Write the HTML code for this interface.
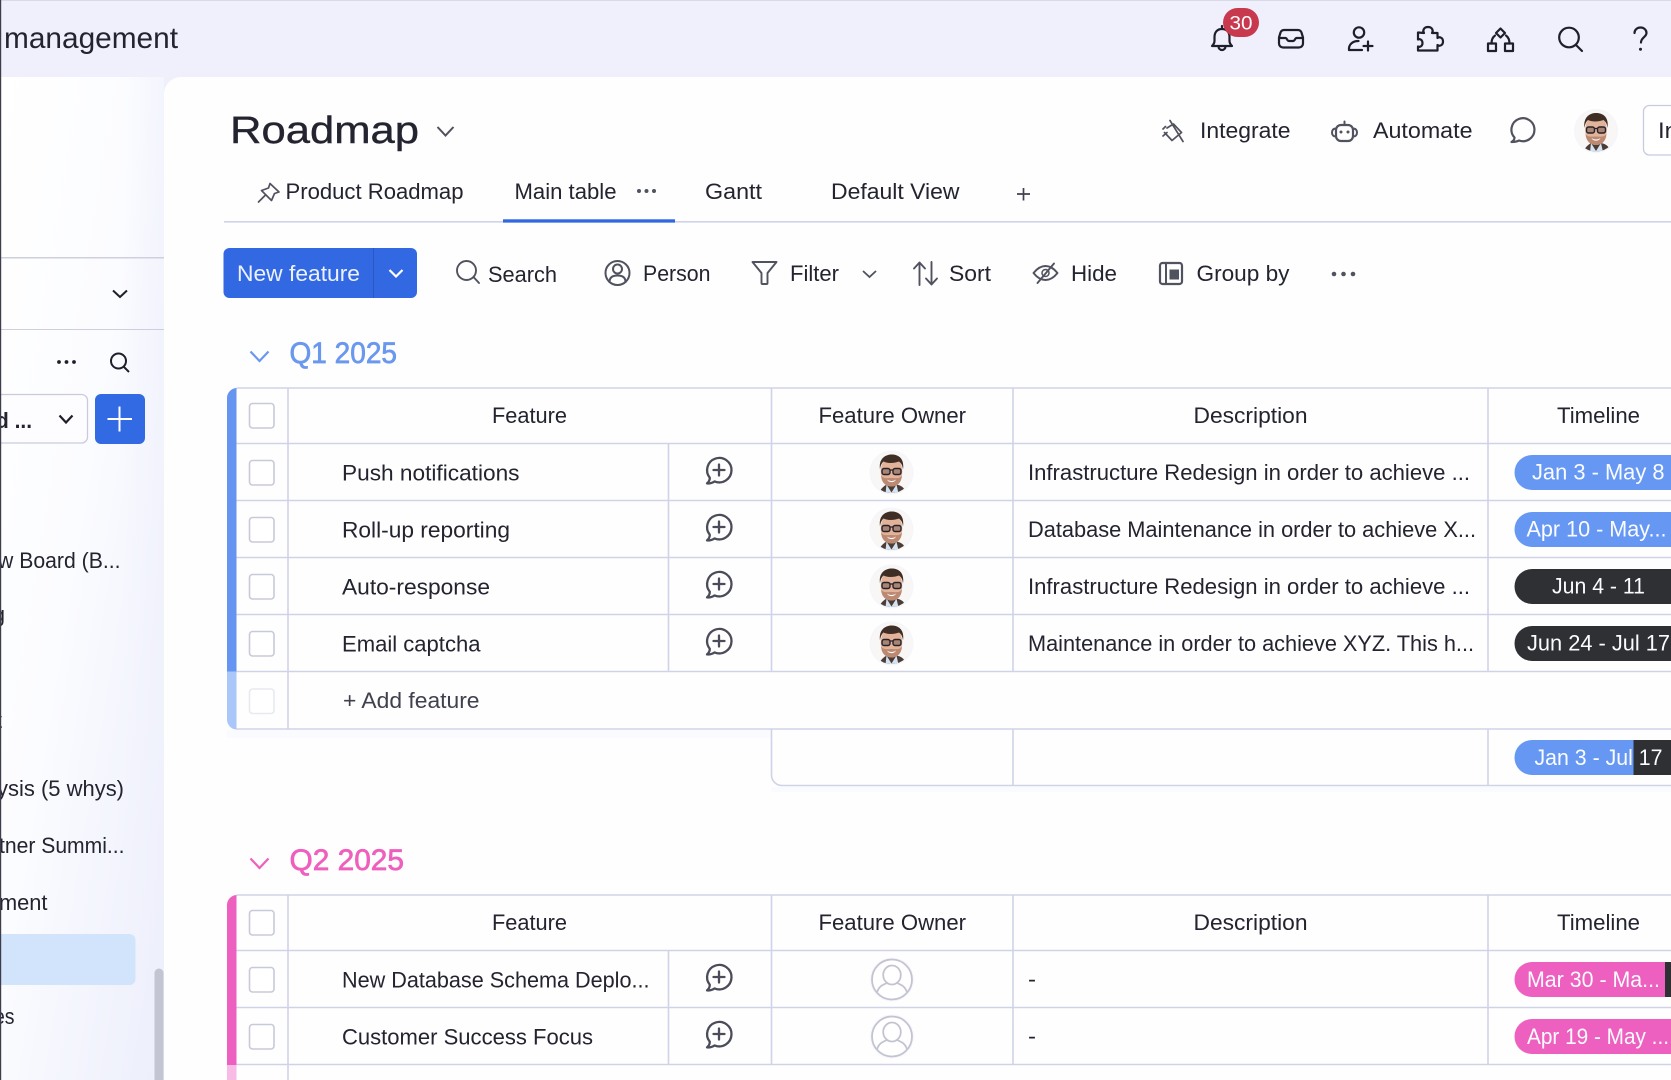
<!DOCTYPE html>
<html lang="en">
<head>
<meta charset="utf-8">
<title>Roadmap</title>
<style>
html,body{margin:0;padding:0;width:1671px;height:1080px;overflow:hidden;background:#fff}
svg{display:block;position:absolute;left:0;top:0}
text{font-family:"Liberation Sans",sans-serif;font-size:22.5px;fill:#23242f;}
.g{fill:#40414e}
.w{fill:#fbfcff}
.ic{fill:none;stroke:#50525f;stroke-width:1.9;stroke-linecap:round;stroke-linejoin:round}
.top{fill:none;stroke:#1e1f2b;stroke-width:2.2;stroke-linecap:round;stroke-linejoin:round}
.ln{stroke:#d0d3e8;stroke-width:1.6;fill:none}
.cb{fill:#fff;stroke:#c8cad9;stroke-width:1.6}
</style>
</head>
<body>
<svg xmlns="http://www.w3.org/2000/svg" width="1671" height="1080" viewBox="0 0 1671 1080">
<defs>
<linearGradient id="sb" x1="0" y1="0" x2="1" y2="1">
<stop offset="0" stop-color="#ffffff"/><stop offset=".45" stop-color="#fbfcff"/><stop offset="1" stop-color="#eceefb"/>
</linearGradient>
<linearGradient id="sb2" x1="0" y1="0" x2="1" y2="0">
<stop offset="0" stop-color="#eff0fc" stop-opacity="0"/><stop offset=".75" stop-color="#eff0fc" stop-opacity="0"/><stop offset="1" stop-color="#eff0fc" stop-opacity=".55"/>
</linearGradient>
<clipPath id="avc"><circle cx="0" cy="0" r="20.5"/></clipPath>
<g id="av">
<circle cx="0" cy="0" r="22" fill="#f5f6fb"/>
<g clip-path="url(#avc)">
<rect x="-21" y="-21" width="42" height="42" fill="#f8f7f6"/>
<path d="M-13 22 C-11 16 -8 14 -5 12 L5 12 C9 13 13 14 15 22 Z" fill="#4a3c36"/>
<path d="M-5 12 L0 20 L5 12 L7 21 L-6 21 Z" fill="#d5e2f0"/>
<ellipse cx="0" cy="-1" rx="10.800" ry="15" fill="#e2b299"/>
<path d="M-10.500 3 C-10 10 -6 14 0 14 C6 14 10 10 10.500 3 C8 6.500 5 5.500 0 5.500 C-5 5.500 -8 6.500 -10.500 3 Z" fill="#bc8a72"/>
<path d="M-11.500 -3 C-13 -13 -7 -18 0 -18 C8 -18 13 -13 11.500 -3 C11 -7 10 -9 7.500 -11 C2 -9 -4 -9 -8 -11 C-10 -9 -11 -7 -11.500 -3 Z" fill="#3f2e25"/>
<rect x="-9.500" y="-4" width="8" height="6" rx="2" fill="#a88474" stroke="#26222a" stroke-width="1.400"/>
<rect x="1.500" y="-4" width="8" height="6" rx="2" fill="#a88474" stroke="#26222a" stroke-width="1.400"/>
<path d="M-1.500 -2.500 H1.500" stroke="#26222a" stroke-width="1.200"/>
<path d="M-4.500 7 C-2 9 2 9 4.500 7 C3 10.500 -3 10.500 -4.500 7 Z" fill="#fff"/>
</g>
</g>
<g id="ph">
<circle cx="0" cy="0" r="22" fill="#f6f7fc"/>
<circle cx="0" cy="0" r="20" fill="#fff" stroke="#c3c4d2" stroke-width="1.800"/>
<ellipse cx="0" cy="-4.500" rx="8.800" ry="9.500" fill="none" stroke="#c3c4d2" stroke-width="1.800"/>
<path d="M-15 13 C-13 6 -8 5 -5 3.500 M15 13 C13 6 8 5 5 3.500" fill="none" stroke="#c3c4d2" stroke-width="1.800"/>
</g>
<g id="cm">
<path d="M-9.200 7.800 A12.200 12.200 0 1 1 -4.400 11.400 C-6.500 12.800 -9.500 13.600 -12 13.400 C-10.200 12 -9.200 10 -9.200 7.800 Z" fill="none" stroke="#4a4c59" stroke-width="2.300" stroke-linejoin="round"/>
<path d="M0 -5.500 V5.500 M-5.500 0 H5.500" stroke="#4a4c59" stroke-width="2.300" stroke-linecap="round"/>
</g>
</defs>

<!-- backgrounds -->
<rect width="1671" height="1080" fill="#f0f0fc"/>
<rect x="0" y="0" width="1671" height="1" fill="#d9dae8"/>
<rect x="0" y="77" width="164" height="1003" fill="url(#sb)"/>
<rect x="0" y="77" width="164" height="1003" fill="url(#sb2)"/>
<path d="M164 1080 V94 A17 17 0 0 1 181 77 H1671 V1080 Z" fill="#fefefe"/>

<!-- top bar -->
<text x="4" y="48" style="font-size:30px" textLength="174" lengthAdjust="spacingAndGlyphs">management</text>
<path class="top" d="M1222 29 c-5 0 -7.500 3.500 -7.500 8 v4 c0 2 -1 3.500 -2.500 5 h20 c-1.500 -1.500 -2.500 -3 -2.500 -5 v-4 c0 -4.500 -2.500 -8 -7.500 -8z M1222 26 v3 M1218.500 46.500 a3.500 3.500 0 0 0 7 0"/>
<rect x="1223" y="8" width="36" height="29" rx="14.500" fill="#c9394e"/>
<text class="w" x="1229.500" y="29.500" style="font-size:19px" textLength="23" lengthAdjust="spacingAndGlyphs">30</text>
<path class="top" d="M1284 30 h14 a4 4 0 0 1 3.500 2.500 l1.500 5 v6 a4 4 0 0 1 -4 4 h-16 a4 4 0 0 1 -4 -4 v-6 l1.500 -5 a4 4 0 0 1 3.500 -2.500z M1279 38 h6.500 c1.500 0 1.500 3 3.500 3 h4 c2 0 2 -3 3.500 -3 h6.500"/>
<circle class="top" cx="1359" cy="32.500" r="5.200"/>
<path class="top" d="M1349 50 c-.5 -5.500 3.500 -9 9.500 -9 M1349 50 h13 M1368 41.500 v9 M1363.500 46 h9"/>
<path class="top" d="M1424 33 c-1.500 -2 -.5 -6 4 -6 s5.500 4 4 6 h5.500 v5 c2 -1.500 5.500 -.5 5.500 3.500 s-3.500 5 -5.500 3.500 v5.500 h-19.500 v-4 c2 1 4.500 -.5 4.500 -3.500 s-2.500 -4.500 -4.500 -3.500 v-7 z"/>
<path class="top" d="M1500.500 28.500 l4.500 4.500 l-4.500 4.500 l-4.500 -4.500z M1495 35.500 c-2 1.500 -3.500 4 -3.500 8 M1506 35.500 c2 1.500 3.500 4 3.500 8"/>
<rect class="top" x="1488" y="43.500" width="8" height="7.500"/>
<rect class="top" x="1505" y="43.500" width="8" height="7.500"/>
<circle class="top" cx="1569" cy="37.500" r="9.800"/>
<path class="top" d="M1576 45 L1582 51"/>
<path class="top" d="M1634.500 33 c0 -3.500 3 -5.500 6 -5.500 s6 2 6 5.500 c0 4 -5.500 4.500 -5.500 9.500"/>
<circle cx="1640.500" cy="49.300" r="1.500" fill="#1e1f2b"/>

<!-- sidebar -->
<rect x="0" y="257" width="164" height="1.500" fill="#cfd0de"/>
<rect x="0" y="329" width="164" height="1" fill="#cdcfde"/>
<path d="M113 290.500 L120 297 L127 290.500" fill="none" stroke="#1e1f2b" stroke-width="2"/>
<circle cx="59" cy="362" r="1.900" fill="#1e1f2b"/><circle cx="66.500" cy="362" r="1.900" fill="#1e1f2b"/><circle cx="74" cy="362" r="1.900" fill="#1e1f2b"/>
<circle cx="118.500" cy="361" r="7.500" fill="none" stroke="#1e1f2b" stroke-width="2"/>
<path d="M124 367 L129 372" stroke="#1e1f2b" stroke-width="2"/>
<rect x="-10" y="394.500" width="97.500" height="48.500" rx="6" fill="#fdfdff" stroke="#c9cbd9" stroke-width="1.300"/>
<text x="-4" y="428" style="font-weight:700" textLength="36" lengthAdjust="spacingAndGlyphs">d ...</text>
<path d="M59.500 415.500 L66 422.500 L72.500 415.500" fill="none" stroke="#1e1f2b" stroke-width="2.200"/>
<rect x="95" y="394" width="50" height="50" rx="6" fill="#326ae4"/>
<path d="M119.500 406.500 V431.500 M107.500 419 H132" stroke="#fff" stroke-width="2"/>
<text x="-2" y="568" textLength="122.500" lengthAdjust="spacingAndGlyphs">w Board (B...</text>
<text x="-7" y="622" textLength="12" lengthAdjust="spacingAndGlyphs">g</text>
<text x="-4" y="728" textLength="6" lengthAdjust="spacingAndGlyphs">t</text>
<text x="-3" y="796" textLength="127" lengthAdjust="spacingAndGlyphs">ysis (5 whys)</text>
<text x="-1" y="853" textLength="125.500" lengthAdjust="spacingAndGlyphs">tner Summi...</text>
<text x="-1" y="910" textLength="48.500" lengthAdjust="spacingAndGlyphs">ment</text>
<rect x="-8" y="934" width="143.500" height="51" rx="6" fill="#d1e4fc"/>
<text x="-6" y="1024" textLength="20.500" lengthAdjust="spacingAndGlyphs">es</text>
<path d="M154.500 1080 V973 a4.500 4.500 0 0 1 9 0 V1080 Z" fill="#c4c5d3"/>
<rect x="0" y="0" width="1.200" height="1080" fill="#3d3d4b"/>

<!-- header -->
<text x="230" y="143" style="font-size:38px;stroke:#2a2b38;stroke-width:.4" textLength="189" lengthAdjust="spacingAndGlyphs">Roadmap</text>
<path d="M437.500 127 L445.500 135.500 L453.500 127" fill="none" stroke="#50525f" stroke-width="2"/>

<path class="ic" d="M1165.500 126.500 L1163 129 M1163 136 L1167 132.500 M1167 128 L1173.500 124 L1181.500 132.500 L1172 140.500 L1164.500 132.500 M1170 120.500 L1183 141.500" style="stroke-width:1.700"/>
<text x="1200" y="138" textLength="90.500" lengthAdjust="spacingAndGlyphs">Integrate</text>
<rect class="ic" x="1336" y="125" width="17" height="16" rx="5" style="stroke-width:2.200"/>
<path class="ic" d="M1344.500 125 v-3.500 M1336 128.500 c-3 0 -4 2 -4 4 s1 4 4 4 M1353 128.500 c3 0 4 2 4 4 s-1 4 -4 4" style="stroke-width:2"/>
<circle cx="1341" cy="132" r="1.500" fill="#50525f"/><circle cx="1348" cy="132" r="1.500" fill="#50525f"/>
<text x="1373" y="138" textLength="99.500" lengthAdjust="spacingAndGlyphs">Automate</text>
<path class="ic" d="M1514.500 137.500 A11.500 11.500 0 1 1 1519 140.500 C1517 141.500 1514 142 1511.500 142 C1513.300 141 1514.500 139.500 1514.500 137.500 Z" style="stroke-width:2.200"/>
<use href="#av" x="1596" y="131"/>
<rect x="1643.500" y="105.500" width="60" height="49.500" rx="6" fill="#fff" stroke="#c8cbe0" stroke-width="1.300"/>
<text x="1658" y="138" textLength="20" lengthAdjust="spacingAndGlyphs">In</text>

<!-- tabs -->
<path class="ic" d="M270 183.500 L279 192 L274.500 193.500 L271.500 200.500 L261.500 190.500 L268.500 188 Z M265 195.500 L258.500 202" style="stroke-width:1.700"/>
<text x="285.500" y="199" textLength="178" lengthAdjust="spacingAndGlyphs">Product Roadmap</text>
<text x="514.500" y="199" textLength="102" lengthAdjust="spacingAndGlyphs">Main table</text>
<circle cx="639" cy="191" r="2" fill="#50525f"/><circle cx="646.500" cy="191" r="2" fill="#50525f"/><circle cx="654" cy="191" r="2" fill="#50525f"/>
<text x="705" y="199" textLength="57" lengthAdjust="spacingAndGlyphs">Gantt</text>
<text x="831" y="199" textLength="128.500" lengthAdjust="spacingAndGlyphs">Default View</text>
<path d="M1023.500 188 V200.500 M1017 194 H1030" stroke="#40414e" stroke-width="1.700"/>
<rect x="224" y="221" width="1447" height="1.600" fill="#d0d3e8"/>
<rect x="503" y="219.300" width="172" height="3.300" fill="#2f68e0"/>

<!-- toolbar -->
<rect x="223.500" y="248" width="193.500" height="50" rx="6" fill="#3269e3"/>
<rect x="373" y="248" width="1" height="50" fill="#2a58c0"/>
<text class="w" x="237" y="281" textLength="123" lengthAdjust="spacingAndGlyphs" style="opacity:.93">New feature</text>
<path d="M389.500 270 L396 276.500 L402.500 270" fill="none" stroke="#fff" stroke-width="2.200"/>
<circle class="ic" cx="466.500" cy="270.500" r="9.500"/>
<path class="ic" d="M473.500 277 L479 283"/>
<text x="488" y="282" textLength="69" lengthAdjust="spacingAndGlyphs">Search</text>
<circle class="ic" cx="617.500" cy="273" r="12" style="stroke-width:2"/>
<circle class="ic" cx="617.500" cy="269" r="4.500" style="stroke-width:2"/>
<path class="ic" d="M609.500 282 c0 -4.500 3 -6.500 8 -6.500 s8 2 8 6.500" style="stroke-width:2"/>
<text x="643" y="281" textLength="67.500" lengthAdjust="spacingAndGlyphs">Person</text>
<path class="ic" d="M752.500 262 h24 l-9 11 v10 a1 1 0 0 1 -1 1 h-4 a1 1 0 0 1 -1 -1 v-10 z"/>
<text x="790" y="281" textLength="49" lengthAdjust="spacingAndGlyphs">Filter</text>
<path d="M863 271 L869.500 277 L876 271" fill="none" stroke="#50525f" stroke-width="1.800"/>
<path class="ic" d="M919.500 285 V263 M914 268.500 L919.500 262.500 L925 268.500 M931.500 262 V284 M926 278.500 L931.500 284.500 L937 278.500"/>
<text x="949" y="281" textLength="42" lengthAdjust="spacingAndGlyphs">Sort</text>
<path class="ic" d="M1033.500 273 c4 -5 8 -7 12 -7 s8 2 12 7 c-4 5 -8 7 -12 7 s-8 -2 -12 -7z M1037.500 283 L1054 263.500"/>
<circle class="ic" cx="1045.500" cy="273" r="3.500" style="stroke-width:1.500"/>
<text x="1071" y="281" textLength="46" lengthAdjust="spacingAndGlyphs">Hide</text>
<rect class="ic" x="1160" y="263" width="22" height="21" rx="2.500" style="stroke-width:2.200"/>
<path class="ic" d="M1166 263 v21" style="stroke-width:2"/>
<rect x="1169.500" y="269.500" width="9.500" height="10" fill="#50525f"/>
<text x="1196.500" y="281" textLength="93" lengthAdjust="spacingAndGlyphs">Group by</text>
<circle cx="1334" cy="274" r="2.300" fill="#50525f"/><circle cx="1343.500" cy="274" r="2.300" fill="#50525f"/><circle cx="1353" cy="274" r="2.300" fill="#50525f"/>

<!-- Q1 group -->
<path d="M250.500 351.500 L259.500 361 L268.500 351.500" fill="none" stroke="#6a98ef" stroke-width="2.200"/>
<text x="289.500" y="363" style="font-size:29.500px;fill:#6a98ef;stroke:#6a98ef;stroke-width:.7" textLength="107.500" lengthAdjust="spacingAndGlyphs">Q1 2025</text>

<rect x="227" y="730" width="544" height="8" fill="#fafbfe"/>
<rect x="771" y="787" width="900" height="5" fill="#fafbfe"/>
<path d="M236.500 388 H1671 M236.500 443.500 H1671 M236.500 500.500 H1671 M236.500 557.500 H1671 M236.500 614.500 H1671 M236.500 671.500 H1671 M236.500 729 H1671 M288 388 V729 M668.500 443.500 V671.500 M771.500 388 V671.500 M1013 388 V671.500 M1488 388 V671.500" class="ln"/>
<path d="M771.500 729 V775 A10.500 10.500 0 0 0 782 785.500 H1671 M1013 729 V785.500 M1488 729 V785.500" class="ln"/>
<path d="M236.500 388 V671.500 H227 V398 A10 10 0 0 1 236.500 388 Z" fill="#6594f1"/>
<path d="M227 671.500 H236.500 V729.500 A10 10 0 0 1 227 720 Z" fill="#abc7fa"/>

<rect class="cb" x="249.500" y="403.500" width="24.500" height="24.500" rx="3"/>
<rect class="cb" x="249.500" y="460.500" width="24.500" height="24.500" rx="3"/>
<rect class="cb" x="249.500" y="517.500" width="24.500" height="24.500" rx="3"/>
<rect class="cb" x="249.500" y="574.500" width="24.500" height="24.500" rx="3"/>
<rect class="cb" x="249.500" y="631.500" width="24.500" height="24.500" rx="3"/>
<rect class="cb" x="249.500" y="689" width="24.500" height="24.500" rx="3" style="stroke:#e8e9f1"/>

<text x="492" y="423" textLength="75" lengthAdjust="spacingAndGlyphs">Feature</text>
<text x="818.500" y="423" textLength="147.500" lengthAdjust="spacingAndGlyphs">Feature Owner</text>
<text x="1193.500" y="423" textLength="114" lengthAdjust="spacingAndGlyphs">Description</text>
<text x="1557" y="423" textLength="83" lengthAdjust="spacingAndGlyphs">Timeline</text>

<text x="342" y="480.300" textLength="177.500" lengthAdjust="spacingAndGlyphs">Push notifications</text>
<text x="342" y="537.300" textLength="168" lengthAdjust="spacingAndGlyphs">Roll-up reporting</text>
<text x="342" y="594.300" textLength="148" lengthAdjust="spacingAndGlyphs">Auto-response</text>
<text x="342" y="651.300" textLength="138.500" lengthAdjust="spacingAndGlyphs">Email captcha</text>
<text class="g" x="343" y="708" textLength="136.500" lengthAdjust="spacingAndGlyphs">+ Add feature</text>

<use href="#cm" x="719" y="470"/>
<use href="#cm" x="719" y="527"/>
<use href="#cm" x="719" y="584"/>
<use href="#cm" x="719" y="641"/>

<use href="#av" x="891.500" y="472.500"/>
<use href="#av" x="891.500" y="529.500"/>
<use href="#av" x="891.500" y="586.500"/>
<use href="#av" x="891.500" y="643.500"/>

<text x="1028" y="480" textLength="442" lengthAdjust="spacingAndGlyphs">Infrastructure Redesign in order to achieve ...</text>
<text x="1028" y="537" textLength="448" lengthAdjust="spacingAndGlyphs">Database Maintenance in order to achieve X...</text>
<text x="1028" y="594" textLength="442" lengthAdjust="spacingAndGlyphs">Infrastructure Redesign in order to achieve ...</text>
<text x="1028" y="651" textLength="446" lengthAdjust="spacingAndGlyphs">Maintenance in order to achieve XYZ. This h...</text>

<rect x="1514.500" y="455" width="190" height="35" rx="17.500" fill="#6698f3"/>
<text class="w" x="1532" y="479.500" textLength="132.500" lengthAdjust="spacingAndGlyphs">Jan 3 - May 8</text>
<rect x="1514.500" y="512" width="190" height="35" rx="17.500" fill="#6698f3"/>
<text class="w" x="1526.500" y="536.500" textLength="140" lengthAdjust="spacingAndGlyphs">Apr 10 - May...</text>
<rect x="1514.500" y="569" width="190" height="35" rx="17.500" fill="#2f3033"/>
<text class="w" x="1552" y="593.500" textLength="93" lengthAdjust="spacingAndGlyphs">Jun 4 - 11</text>
<rect x="1514.500" y="626" width="190" height="35" rx="17.500" fill="#2f3033"/>
<text class="w" x="1527" y="650.500" textLength="143" lengthAdjust="spacingAndGlyphs">Jun 24 - Jul 17</text>
<rect x="1514.500" y="740" width="190" height="35" rx="17.500" fill="#6698f3"/>
<rect x="1633.500" y="740" width="39" height="35" fill="#2f3033"/>
<text class="w" x="1534.500" y="765" textLength="128" lengthAdjust="spacingAndGlyphs">Jan 3 - Jul 17</text>

<!-- Q2 group -->
<path d="M250.500 858.500 L259.500 868 L268.500 858.500" fill="none" stroke="#ee5fbe" stroke-width="2.200"/>
<text x="289.500" y="870" style="font-size:29.500px;fill:#ee5fbe;stroke:#ee5fbe;stroke-width:.7" textLength="114.500" lengthAdjust="spacingAndGlyphs">Q2 2025</text>

<path d="M236.500 895 H1671 M236.500 950.500 H1671 M236.500 1007.500 H1671 M236.500 1064.500 H1671 M288 895 V1080 M668.500 950.500 V1064.500 M771.500 895 V1064.500 M1013 895 V1064.500 M1488 895 V1064.500" class="ln"/>
<path d="M236.500 895 V1065 H227 V905 A10 10 0 0 1 236.500 895 Z" fill="#ed60c0"/>
<rect x="227" y="1065" width="9.500" height="15" fill="#f7bbe5"/>

<rect class="cb" x="249.500" y="910.500" width="24.500" height="24.500" rx="3"/>
<rect class="cb" x="249.500" y="967.500" width="24.500" height="24.500" rx="3"/>
<rect class="cb" x="249.500" y="1024.500" width="24.500" height="24.500" rx="3"/>

<text x="492" y="930" textLength="75" lengthAdjust="spacingAndGlyphs">Feature</text>
<text x="818.500" y="930" textLength="147.500" lengthAdjust="spacingAndGlyphs">Feature Owner</text>
<text x="1193.500" y="930" textLength="114" lengthAdjust="spacingAndGlyphs">Description</text>
<text x="1557" y="930" textLength="83" lengthAdjust="spacingAndGlyphs">Timeline</text>

<text x="342" y="987.500" textLength="307.500" lengthAdjust="spacingAndGlyphs">New Database Schema Deplo...</text>
<text x="342" y="1044.500" textLength="251" lengthAdjust="spacingAndGlyphs">Customer Success Focus</text>

<use href="#cm" x="719" y="977"/>
<use href="#cm" x="719" y="1034"/>
<use href="#ph" x="892" y="979.500"/>
<use href="#ph" x="892" y="1036.500"/>

<text x="1028" y="986.500" textLength="8" lengthAdjust="spacingAndGlyphs">-</text>
<text x="1028" y="1043.500" textLength="8" lengthAdjust="spacingAndGlyphs">-</text>

<rect x="1665" y="962" width="20" height="35" fill="#2f3033"/>
<path d="M1665 962 H1532 A17.500 17.500 0 0 0 1532 997 H1665 Z" fill="#ed60c0"/>
<text class="w" x="1527" y="987" textLength="133" lengthAdjust="spacingAndGlyphs">Mar 30 - Ma...</text>
<rect x="1514.500" y="1019" width="190" height="35" rx="17.500" fill="#ed60c0"/>
<text class="w" x="1527" y="1044" textLength="142" lengthAdjust="spacingAndGlyphs">Apr 19 - May ...</text>
</svg>
</body>
</html>
